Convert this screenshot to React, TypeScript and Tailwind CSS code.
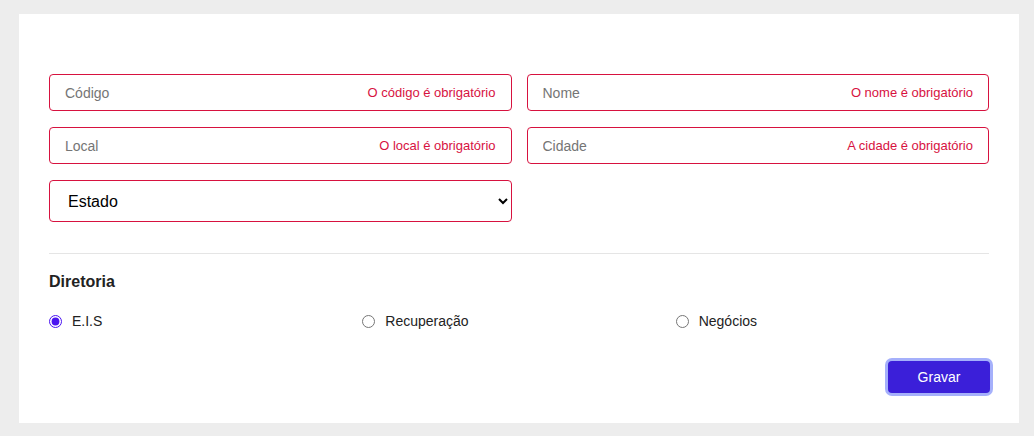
import React, { useState } from 'react';

const fields = [
  { placeholder: 'Código', error: 'O código é obrigatório' },
  { placeholder: 'Nome', error: 'O nome é obrigatório' },
  { placeholder: 'Local', error: 'O local é obrigatório' },
  { placeholder: 'Cidade', error: 'A cidade é obrigatório' },
];

const diretorias = ['E.I.S', 'Recuperação', 'Negócios'];

function Field({ placeholder, error }: { placeholder: string; error: string }) {
  return (
    <div className="relative h-[37px] rounded-[4px] border border-[#d7123f] bg-white">
      <input
        placeholder={placeholder}
        className="h-full w-full rounded-[4px] bg-transparent pl-[15px] pr-[180px] text-[14px] text-[#222] placeholder:text-[#757575] outline-none"
      />
      <span className="pointer-events-none absolute right-[15px] top-1/2 -translate-y-1/2 text-[13px] text-[#d7123f]">
        {error}
      </span>
    </div>
  );
}

export default function App() {
  const [diretoria, setDiretoria] = useState('E.I.S');

  return (
    <div className="min-h-screen bg-[#ededed] pt-[14px] pl-[19px] font-['Liberation_Sans',Arial,sans-serif]">
      <form className="w-[1000px] bg-white px-[30px] pt-[60px] pb-[30px]" onSubmit={(e) => e.preventDefault()}>
        <div className="grid grid-cols-2 gap-x-[15px] gap-y-[16px]">
          {fields.map((f) => (
            <Field key={f.placeholder} placeholder={f.placeholder} error={f.error} />
          ))}
          <select
            defaultValue=""
            className="h-[42px] rounded-[4px] border border-[#d7123f] bg-white pl-[14px] pr-[6px] text-[16px] text-black outline-none"
          >
            <option value="">Estado</option>
            <option value="SP">SP</option>
            <option value="RJ">RJ</option>
          </select>
        </div>

        <div className="mt-[31px] h-px bg-[#e5e5e5]" />

        <h3 className="mt-[18px] text-[16px] font-bold leading-[20px] text-[#222]">Diretoria</h3>

        <div className="mt-[19px] grid grid-cols-3">
          {diretorias.map((d) => (
            <label key={d} className="flex h-[20px] items-center gap-[10px] text-[14px] text-[#222]">
              <input
                type="radio"
                name="diretoria"
                checked={diretoria === d}
                onChange={() => setDiretoria(d)}
                className="m-0 h-[13px] w-[13px] accent-[#4a14f0]"
              />
              {d}
            </label>
          ))}
        </div>

        <div className="mt-[30px] flex justify-end">
          <button
            type="submit"
            className="-mr-px h-[32px] w-[102px] rounded-[4px] bg-[#3b1fd9] text-[14px] text-white ring-[3px] ring-[#a5b0fb]"
          >
            Gravar
          </button>
        </div>
      </form>
    </div>
  );
}
